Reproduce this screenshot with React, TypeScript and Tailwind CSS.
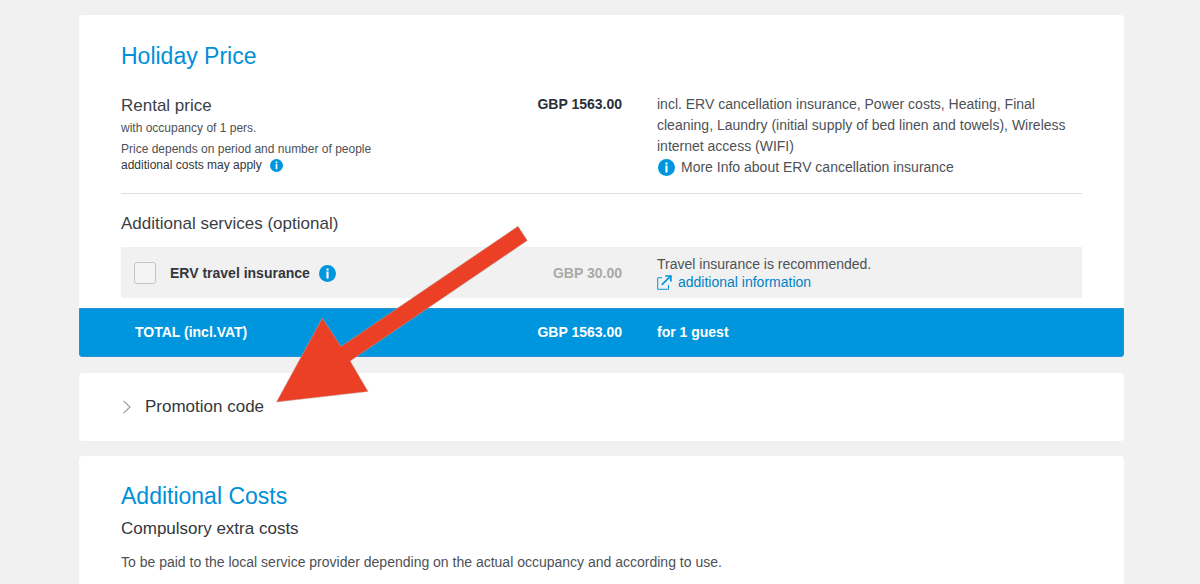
import { useState } from "react";
import clsx from "clsx";

const rowGrid = "grid grid-cols-[366fr_100fr_425fr] gap-x-[35px]";

function InfoIcon({ className }: { className?: string }) {
  return (
    <svg viewBox="0 0 16 16" className={clsx("shrink-0", className)} aria-hidden="true">
      <circle cx="8" cy="8" r="8" fill="#0096de" />
      <path d="M7 3.2h2v1.9H7zM7 6.1h2v6.5H7z" fill="#fff" />
    </svg>
  );
}

function ExternalIcon() {
  return (
    <svg viewBox="0 0 15 15" className="h-[15px] w-[15px] shrink-0" fill="none" stroke="#0096de" aria-hidden="true">
      <path d="M5 2.8H.7v11.5h10.8V9.8" strokeWidth="1" />
      <path d="M4.8 9.8 13.5 1.2" strokeWidth="1.7" />
      <path d="M8.3 1h5.6v5.6" strokeWidth="1.7" />
    </svg>
  );
}

function Chevron({ open }: { open: boolean }) {
  return (
    <svg viewBox="0 0 10 14" className={clsx("h-[14px] w-[10px] shrink-0", open && "rotate-90")} fill="none" stroke="#9a9a9a" strokeWidth="1.1" aria-hidden="true">
      <path d="M1.5 .8 8 7 1.5 13.2" />
    </svg>
  );
}

function PointerArrow() {
  return (
    <svg viewBox="0 0 254 178" className="pointer-events-none absolute left-[275px] top-[225px] h-[178px] w-[254px]" aria-hidden="true">
      <path d="M243 1.3 252.3 15.5 75.2 136 93 166.5 1.5 177 47.3 93 66 121.5Z" fill="#ec4026" stroke="#b9a49c" strokeWidth=".5" />
    </svg>
  );
}

export default function App() {
  const [insured, setInsured] = useState(false);
  const [promoOpen, setPromoOpen] = useState(false);

  return (
    <div className="relative h-screen overflow-hidden bg-[#f1f1f1] pt-[15px] pr-[76px] pl-[79px] font-['Liberation_Sans',Arial,sans-serif] text-sm text-[#4d5156]">
      <main className="flex flex-col">
        <section className="rounded bg-white">
          <div className="px-[42px] pt-[26px] pb-[10px]">
            <h2 className="text-[23px] leading-[30px] text-[#0090d8]">Holiday Price</h2>

            <div className={`${rowGrid} mt-[23px] border-b border-[#dcdfe0] pb-[15px]`}>
              <div className="text-xs leading-4">
                <h3 className="text-[17px] leading-6 text-[#3c4045]">Rental price</h3>
                <p className="mt-[2px]">with occupancy of 1 pers.</p>
                <p className="mt-[5px]">Price depends on period and number of people</p>
                <p className="flex items-center gap-2 text-[#33373c]">
                  additional costs may apply
                  <InfoIcon className="h-[13px] w-[13px]" />
                </p>
              </div>
              <p className="text-right leading-[21px] font-bold whitespace-nowrap text-[#2b2f36]">GBP 1563.00</p>
              <div className="leading-[21px]">
                <p>incl. ERV cancellation insurance, Power costs, Heating, Final cleaning, Laundry (initial supply of bed linen and towels), Wireless internet access (WIFI)</p>
                <p className="flex items-center gap-[6px] pl-[1px]">
                  <InfoIcon className="h-[17px] w-[17px]" />
                  More Info about ERV cancellation insurance
                </p>
              </div>
            </div>

            <h3 className="mt-[18px] text-[17px] leading-6 text-[#3c4045]">Additional services (optional)</h3>
            <div className={`${rowGrid} mt-[11px] items-center bg-[#f1f1f1] pt-2 pb-[7px]`}>
              <div className="flex items-center pl-[13px]">
                <input
                  id="erv"
                  type="checkbox"
                  checked={insured}
                  onChange={(e) => setInsured(e.target.checked)}
                  className="h-[22px] w-[22px] appearance-none rounded-[3px] border border-[#c4c4c4] bg-[#f4f4f4] checked:bg-[#0096de]"
                />
                <label htmlFor="erv" className="ml-[14px] font-bold text-[#33373c]">ERV travel insurance</label>
                <InfoIcon className="ml-[9px] h-[17px] w-[17px]" />
              </div>
              <p className="text-right font-bold whitespace-nowrap text-[#a9a9a9]">GBP 30.00</p>
              <div className="leading-[18px]">
                <p>Travel insurance is recommended.</p>
                <a href="#insurance" className="flex items-center gap-[6px] text-[#0082c8]">
                  <ExternalIcon />
                  additional information
                </a>
              </div>
            </div>
          </div>

          <div className={`${rowGrid} rounded-b-[3px] border border-[#2b8fd0] bg-[#0096de] px-[41px] py-[13px] leading-[21px] font-bold text-white`}>
            <p className="pl-[14px]">TOTAL (incl.VAT)</p>
            <p className="text-right whitespace-nowrap">GBP 1563.00</p>
            <p>for 1 guest</p>
          </div>
        </section>

        <section className="mt-4 rounded bg-white px-[42px] py-[22px]">
          <button
            type="button"
            aria-expanded={promoOpen}
            onClick={() => setPromoOpen(!promoOpen)}
            className="flex items-center gap-[13px] pl-[1px] text-[17px] leading-6 text-[#33373c]"
          >
            <Chevron open={promoOpen} />
            Promotion code
          </button>
        </section>

        <section className="mt-[15px] rounded bg-white px-[42px] pt-[25px] pb-10">
          <h2 className="text-[23px] leading-[30px] text-[#0090d8]">Additional Costs</h2>
          <h3 className="mt-[6px] text-[17px] leading-6 text-[#33373c]">Compulsory extra costs</h3>
          <p className="mt-[11px] leading-[21px]">To be paid to the local service provider depending on the actual occupancy and according to use.</p>
        </section>
      </main>

      <PointerArrow />
    </div>
  );
}
